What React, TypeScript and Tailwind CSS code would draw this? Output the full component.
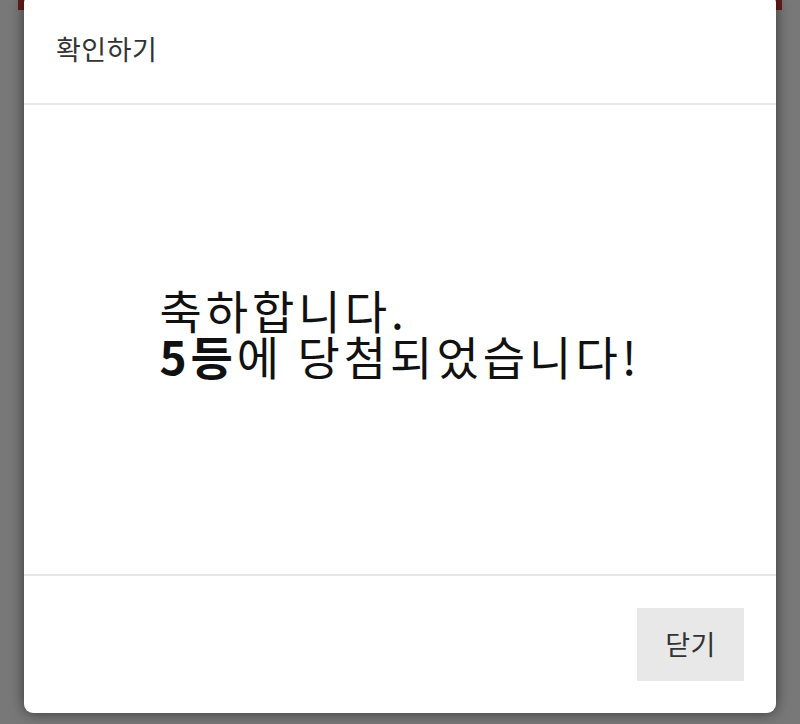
export default function App() {
  return (
    <div
      className="relative h-[724px] w-[800px] overflow-hidden bg-[#787878] px-6"
      style={{ fontFamily: '"Noto Sans CJK KR", "Noto Sans", sans-serif' }}
    >
      {/* page content peeking behind the overlay */}
      <div className="absolute left-[18px] right-[18px] top-0 h-[10px] bg-[#6a1c1c]" />

      <div className="relative -mt-[6px] flex h-[719px] flex-col overflow-hidden rounded-[9px] bg-white shadow-[0_0_14px_rgba(0,0,0,0.55)]">
        {/* Header */}
        <div className="flex h-[111px] shrink-0 items-center border-b-2 border-[#e6e6e6] px-8">
          <h2 className="text-[27px] leading-none tracking-[0.5px] text-[#333]">확인하기</h2>
        </div>

        {/* Body */}
        <div className="flex flex-1 items-center justify-center pb-4">
          <p className="text-left text-[46px] leading-none tracking-[4px] text-[#111]">
            축하합니다.
            <br />
            <b className="font-bold">5등</b>에 당첨되었습니다!
          </p>
        </div>

        {/* Footer */}
        <div className="flex shrink-0 justify-end border-t-2 border-[#e6e6e6] p-8">
          <button className="flex h-[73px] w-[107px] items-center justify-center bg-[#e8e8e8] text-[27px] tracking-[0.5px] text-[#333]">
            닫기
          </button>
        </div>
      </div>
    </div>
  )
}
